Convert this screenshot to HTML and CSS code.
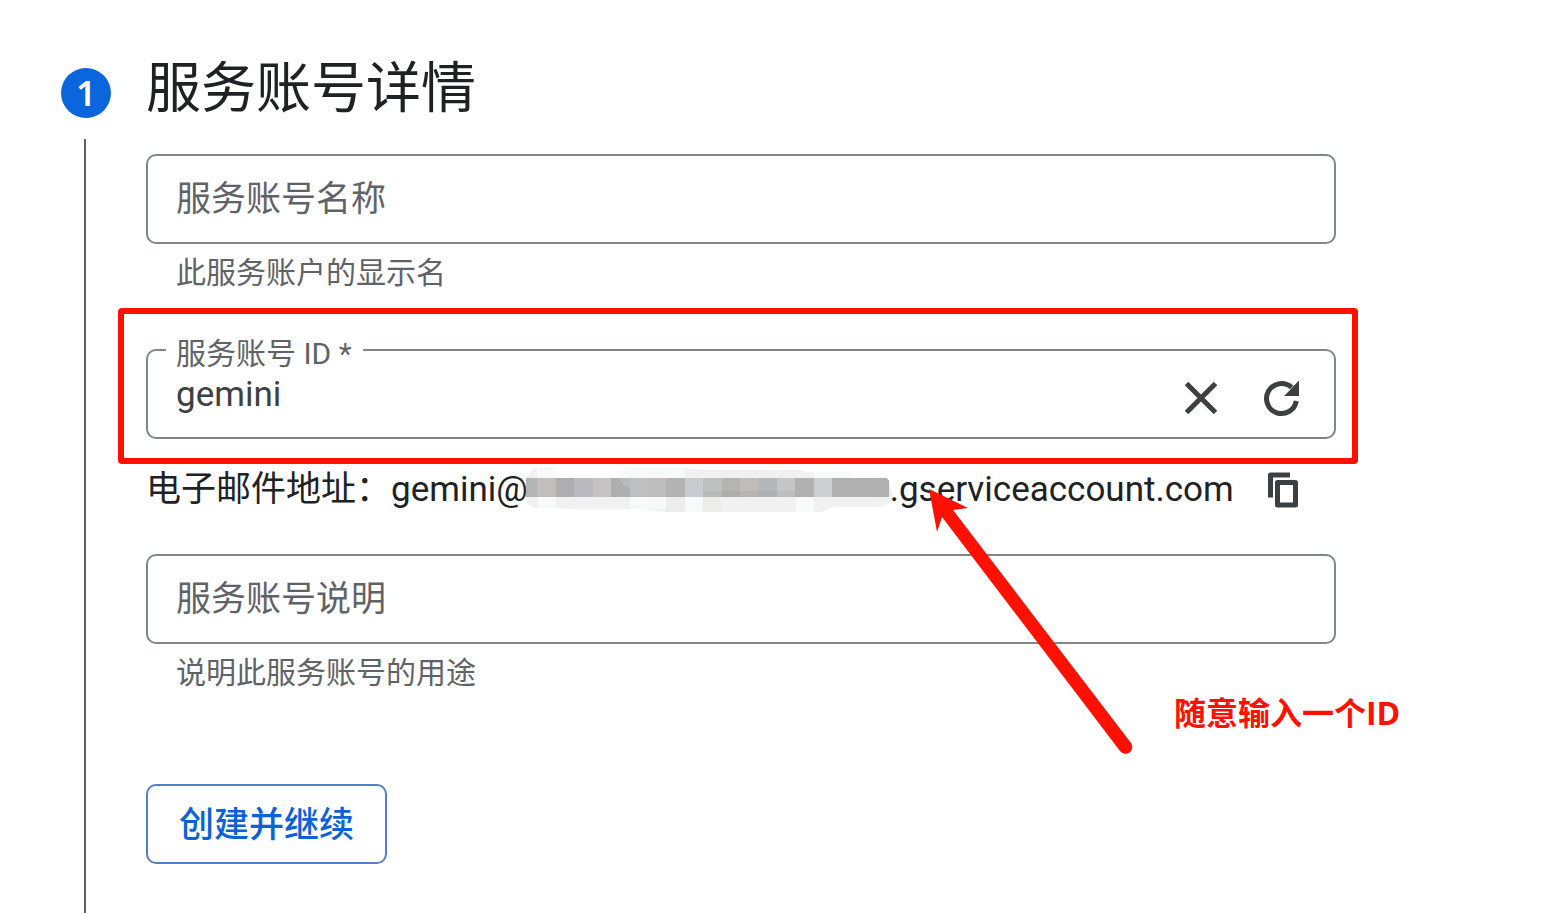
FILE: index.html
```html
<!DOCTYPE html>
<html lang="zh-CN">
<head>
<meta charset="utf-8">
<title>服务账号详情</title>
<meta name="viewport" content="width=device-width, initial-scale=1">
<link rel="stylesheet" href="styles.css">
</head>
<body>
<main class="step">
  <div class="rail">
    <span class="badge">1</span>
    <span class="line"></span>
  </div>
  <form class="details">
    <h1 class="title">服务账号详情</h1>

    <div class="field">
      <input class="box" type="text" placeholder="服务账号名称" aria-label="服务账号名称" aria-describedby="name-hint">
      <p class="hint" id="name-hint">此服务账户的显示名</p>
    </div>

    <div class="id-field">
      <label class="float-label" for="account-id">服务账号 ID *</label>
      <div class="box id-box">
        <input class="id-input" id="account-id" type="text" value="gemini" spellcheck="false">
        <button class="icon-button" type="button" aria-label="清除">
          <svg width="40" height="40" viewBox="0 0 40 40"><path d="M5.500 5.500L34.500 34.500M34.500 5.500L5.500 34.500" fill="none" stroke="currentColor" stroke-width="5"/></svg>
        </button>
        <button class="icon-button" type="button" aria-label="重新生成">
          <svg width="40" height="40" viewBox="0 0 40 40"><path d="M35.300 23A15 15 0 1 1 30.600 9.400" fill="none" stroke="currentColor" stroke-width="5"/><path d="M38 2.500V18H23L29 12L32 8.500Z" fill="currentColor"/></svg>
        </button>
      </div>
      <div class="highlight"></div>
    </div>

    <div class="email">
      <span>电子邮件地址：gemini@</span>
      <svg class="mosaic" width="362" height="44" viewBox="527 468 362 44" aria-hidden="true">
        <path d="M525 478L531 470L537 467H555V478H619Q620 468 630 468H684L702 470H798L806 472H850V478H887L892 495L889 503L880 507H832L820 512H665L640 509H575L550 508H532L526 503Z" fill="#f1f1f1"/>
        <path d="M536 467H555V478H536ZM619 478Q620 468 630 468H684V478ZM813 472H850V478H813ZM537 497H555V508H537ZM629 497H665V509H629ZM684 497H702V512H684ZM795 497H813V512H795Z" fill="#f8f9f9"/>
        <path d="M665 497H684V512H665ZM702 497H720V512H702Z" fill="#ececea"/>
        <g shape-rendering="crispEdges">
          <path d="M525 478H536V497H525Z" fill="#b4b4b4"/>
          <path d="M536 478H555V497H536Z" fill="#c1bebb"/>
          <path d="M555 478H573V497H555Z" fill="#aeaeb0"/>
          <path d="M573 478H592V497H573Z" fill="#b9bbc0"/>
          <path d="M592 478H610V497H592Z" fill="#c6c4c1"/>
          <path d="M610 478H629V497H610Z" fill="#aeafb1"/>
          <path d="M629 478H647V497H629Z" fill="#bdbfc2"/>
          <path d="M647 478H665V497H647Z" fill="#bfbcbd"/>
          <path d="M665 478H684V497H665Z" fill="#b3b3b3"/>
          <path d="M684 478H702V497H684Z" fill="#c9cbd0"/>
          <path d="M702 478H721V497H702Z" fill="#bebfbf"/>
          <path d="M721 478H739V497H721Z" fill="#b4b4b3"/>
          <path d="M739 478H757V497H739Z" fill="#bebdbb"/>
          <path d="M757 478H776V497H757Z" fill="#b5b8ba"/>
          <path d="M776 478H794V497H776Z" fill="#c3c5c7"/>
          <path d="M794 478H813V497H794Z" fill="#b3b0b0"/>
          <path d="M813 478H831V497H813Z" fill="#cbcfd2"/>
          <path d="M831 478H868V497H831Z" fill="#b2b1b2"/>
          <path d="M868 478H885L888 481V497H868Z" fill="#aeb0b2"/>
          <path d="M702 491H794V497H702Z" fill="#000" fill-opacity=".03"/>
        </g>
        <path d="M619 478H629V488Q620 486 619 478Z" fill="#b8b9bb"/>
      </svg>
      <span>.gserviceaccount.com</span>
      <button class="icon-button copy" type="button" aria-label="复制">
        <svg width="40" height="40" viewBox="0 0 40 40"><path d="M8.500 27.500V5H28" fill="none" stroke="currentColor" stroke-width="5" stroke-linejoin="round"/><rect x="15.500" y="12.500" width="18" height="22.500" fill="none" stroke="currentColor" stroke-width="5" stroke-linejoin="round"/></svg>
      </button>
    </div>

    <div class="field">
      <input class="box" type="text" placeholder="服务账号说明" aria-label="服务账号说明" aria-describedby="desc-hint">
      <p class="hint" id="desc-hint">说明此服务账号的用途</p>
    </div>

    <button class="submit" type="button">创建并继续</button>

    <svg class="arrow" width="210" height="270" viewBox="0 0 210 270" aria-hidden="true"><path d="M0 0L39 19L24 21L202 254A6.700 6.700 0 0 1 191 262L13 28L8 43Z" fill="#ff1000"/></svg>
    <p class="note">随意输入一个ID</p>
  </form>
</main>
</body>
</html>
```
FILE: styles.css
```css
* {
  box-sizing: border-box;
}

body {
  margin: 0;
  background: #fff;
  color: #202124;
  font-family: Roboto, "Noto Sans CJK SC", sans-serif;
  font-size: 35px;
}

input,
button {
  font: inherit;
}

.step {
  display: flex;
  gap: 35px;
  min-height: 100vh;
  padding: 56px 209px 0 61px;
}

.rail {
  display: flex;
  flex: 0 0 50px;
  flex-direction: column;
  align-items: center;
  gap: 21px;
  padding-top: 12px;
}

.badge {
  width: 50px;
  height: 50px;
  border-radius: 50%;
  background: #0b65dd;
  color: #fff;
  font-family: "Noto Sans", sans-serif;
  font-size: 35px;
  font-weight: 600;
  line-height: 50px;
  text-align: center;
}

.line {
  flex: 1;
  width: 2px;
  margin-right: 2px;
  background: #5f6368;
}

.details {
  position: relative;
  flex: 1;
  min-width: 0;
}

.title {
  margin: 0 0 34px;
  font-size: 55px;
  font-weight: 400;
  line-height: 64px;
}

.box {
  display: block;
  width: 100%;
  height: 90px;
  padding: 0 28px;
  border: 2px solid #80868b;
  border-radius: 10px;
  background: #fff;
  color: #3c4043;
  outline: 0;
}

.box::placeholder {
  color: #5f6368;
  opacity: 1;
}

.hint {
  margin: 7px 0 0;
  padding: 0 30px;
  color: #5f6368;
  font-size: 30px;
  line-height: 44px;
}

.id-field {
  position: relative;
  margin-top: 54px;
}

.id-box {
  display: flex;
  align-items: center;
  gap: 40px;
  padding-right: 33px;
}

.id-input {
  flex: 1;
  min-width: 0;
  padding: 0;
  border: 0;
  background: none;
  color: #3c4043;
  outline: 0;
}

.id-box .icon-button {
  margin-top: 7px;
}

.float-label {
  position: absolute;
  top: -17px;
  left: 20px;
  padding: 0 11px 0 10px;
  background: #fff;
  color: #5f6368;
  font-size: 30px;
  line-height: 44px;
}

.highlight {
  position: absolute;
  inset: -41px -22px -25px -28px;
  border: 6px solid #ff1000;
  border-radius: 4px;
  pointer-events: none;
}

.icon-button {
  flex: none;
  width: 40px;
  height: 40px;
  padding: 0;
  border: 0;
  background: none;
  color: #3c4043;
}

.icon-button svg {
  display: block;
}

.email {
  display: flex;
  align-items: center;
  margin: 25px 0 39px;
  line-height: 51px;
  white-space: nowrap;
}

.mosaic {
  flex: none;
  overflow: visible;
}

.copy {
  margin-left: 28px;
}

.submit {
  display: block;
  height: 80px;
  margin-top: 89px;
  padding: 0 31px 6px;
  border: 2px solid #5080c6;
  border-radius: 10px;
  background: #fff;
  color: #0b62d6;
  font-weight: 500;
}

.arrow {
  position: absolute;
  top: 433px;
  left: 783px;
  pointer-events: none;
}

.note {
  position: absolute;
  top: 633px;
  left: 1028px;
  margin: 0;
  color: #ff1000;
  font-family: "Open Sans", "Noto Sans CJK SC", sans-serif;
  font-size: 32px;
  font-weight: 700;
  line-height: 48px;
  white-space: nowrap;
}
```
